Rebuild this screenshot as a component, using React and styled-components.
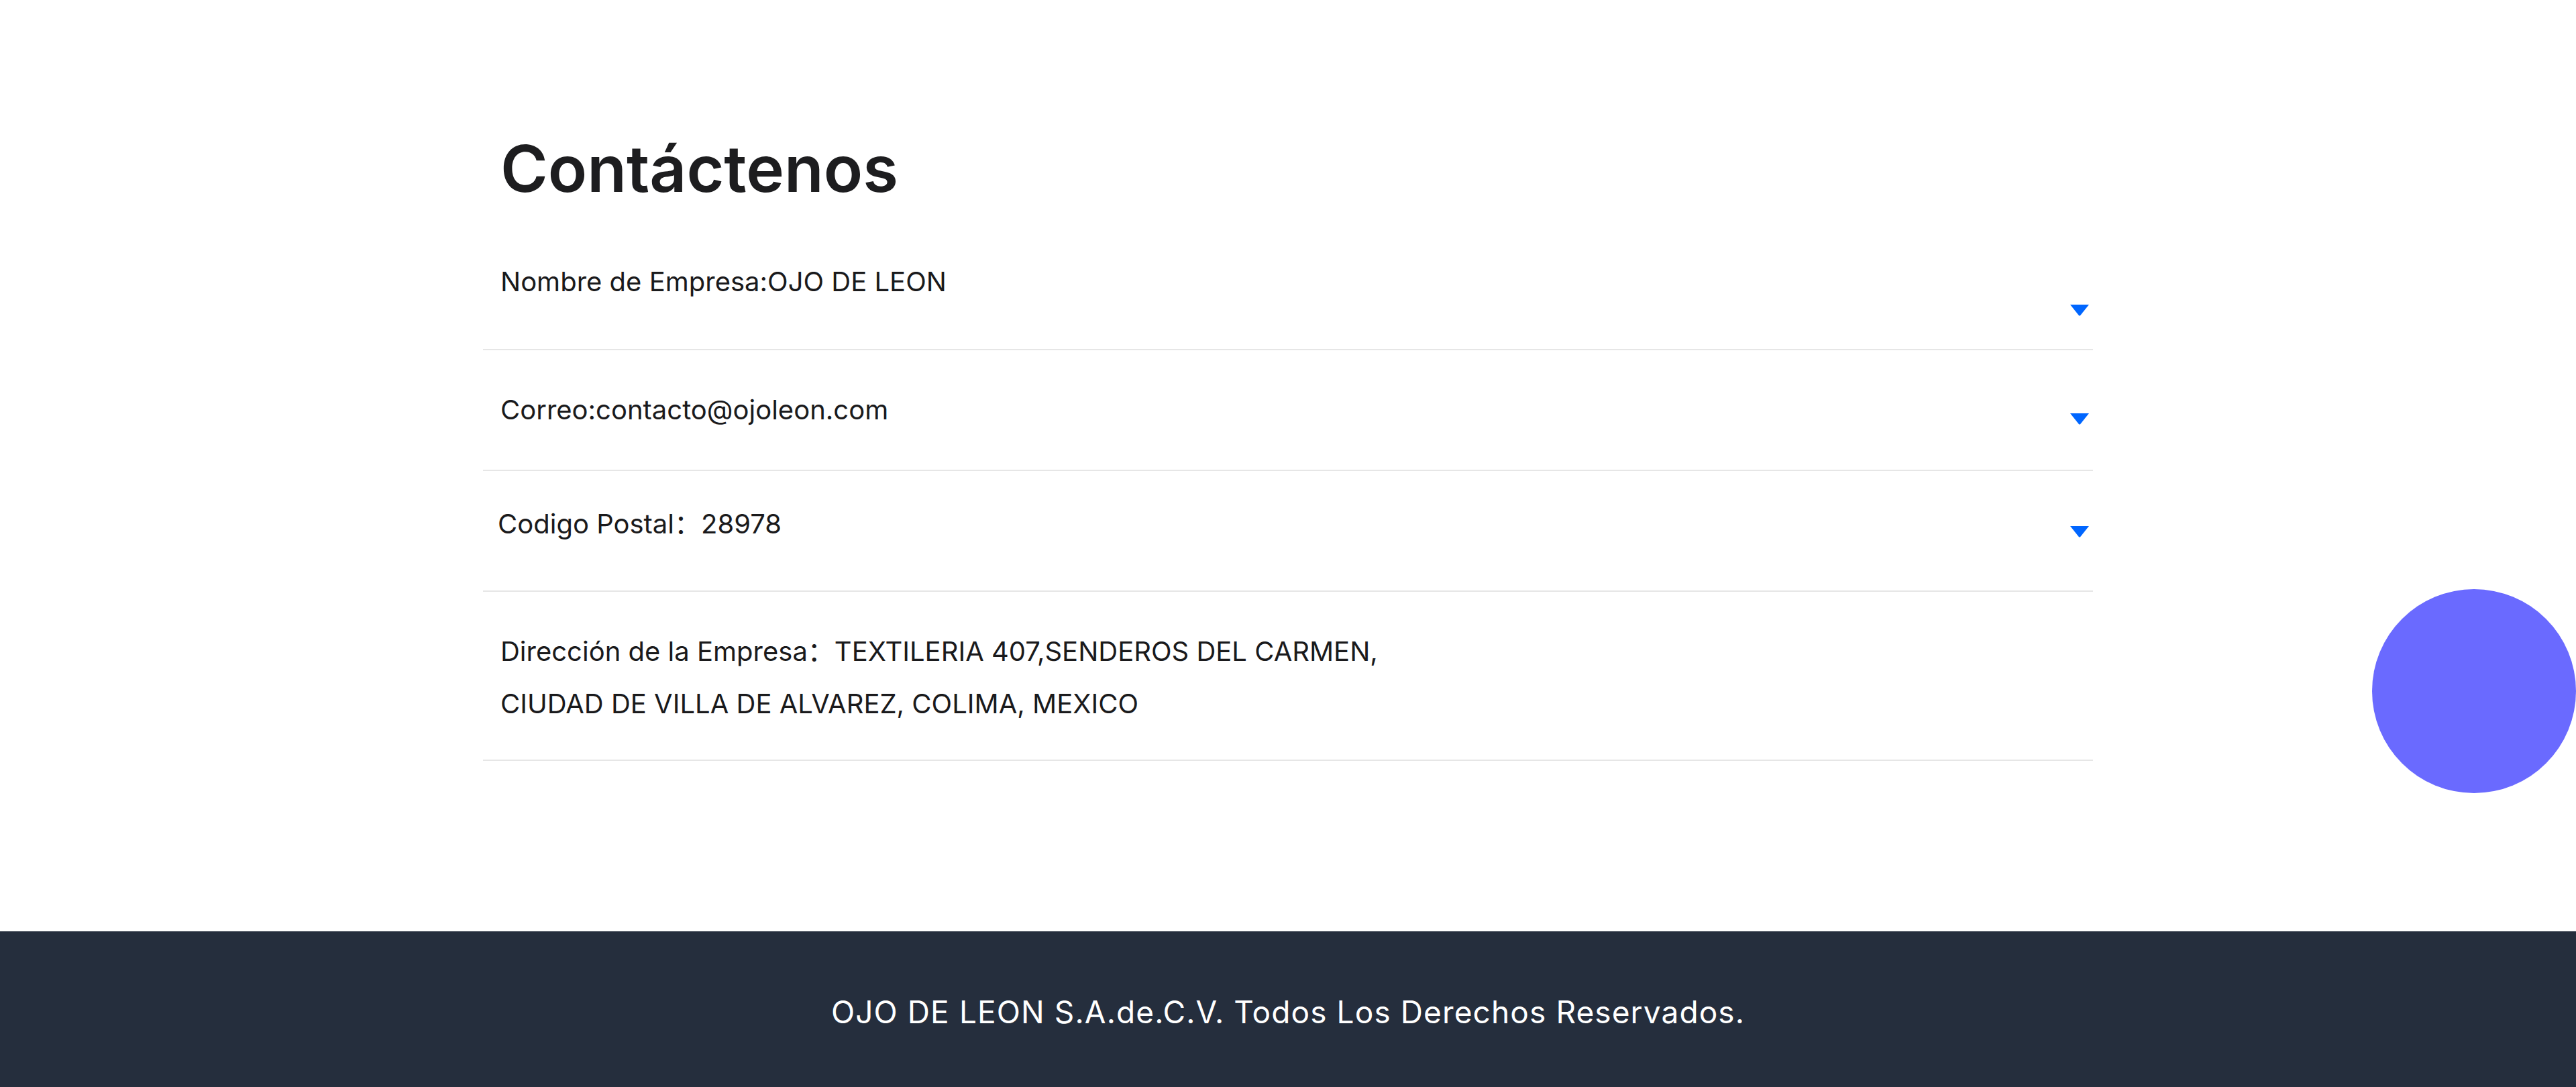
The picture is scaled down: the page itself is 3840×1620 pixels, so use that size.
import React from 'react';
import styled, { createGlobalStyle } from 'styled-components';

const GlobalStyle = createGlobalStyle`
  html, body {
    margin: 0;
    padding: 0;
    background: #ffffff;
    font-family: 'Inter', 'Noto Sans CJK SC', sans-serif;
    color: #1d1d1f;
  }
  * {
    box-sizing: border-box;
  }
`;

const Page = styled.div`
  display: flex;
  flex-direction: column;
  min-height: 100vh;
`;

const Container = styled.main`
  width: 100%;
  max-width: 2400px;
  margin: 0 auto;
  padding: 193px 0 254px;
`;

const Title = styled.h1`
  margin: 0;
  padding-left: 26px;
  font-size: 96px;
  line-height: 116px;
  font-weight: 600;
  color: #1d1d1f;
`;

const List = styled.div`
  display: flex;
  flex-direction: column;
`;

const Row = styled.div`
  display: flex;
  justify-content: space-between;
  align-items: flex-start;
  height: ${props => props.height}px;
  padding: ${props => props.top}px 6px 0 ${props => props.left || 26}px;
  border-bottom: 2px solid #e6e6e6;
`;

const Label = styled.div`
  font-size: 40px;
  line-height: ${props => props.lh || 46}px;
  font-weight: 400;
  color: #1a1a1c;
  white-space: nowrap;
`;

const Arrow = styled.svg`
  flex-shrink: 0;
  width: 28px;
  height: 17px;
  margin-top: ${props => props.offset}px;
  fill: #0066ff;
`;

const Caret = ({ offset }) => (
  <Arrow offset={offset} viewBox="0 0 28 17">
    <path d="M0 0 H28 L15 16.2 Q14 17 13 16.2 Z" />
  </Arrow>
);

const Footer = styled.footer`
  height: 232px;
  padding-top: 93px;
  background: #252e3d;
  color: #ffffff;
  text-align: center;
  font-size: 46px;
  line-height: 55px;
  letter-spacing: 1.1px;
  font-weight: 400;
`;

const FloatBubble = styled.div`
  position: fixed;
  top: 878px;
  right: 0;
  width: 304px;
  height: 304px;
  border-radius: 50%;
  background: #6a6aff;
`;

const rows = [
  { height: 213, top: 88, arrow: 57, text: 'Nombre de Empresa:OJO DE LEON' },
  { height: 180, top: 66, arrow: 28, text: 'Correo:contacto@ojoleon.com' },
  { height: 180, top: 56, arrow: 26, left: 22, text: 'Codigo Postal：28978' },
];

const App = () => {
  return (
    <Page>
      <GlobalStyle />
      <Container>
        <Title>Contáctenos</Title>
        <List>
          {rows.map(row => (
            <Row key={row.text} height={row.height} top={row.top} left={row.left}>
              <Label>{row.text}</Label>
              <Caret offset={row.arrow} />
            </Row>
          ))}
          <Row height={252} top={50}>
            <Label lh={78}>
              Dirección de la Empresa：TEXTILERIA 407,SENDEROS DEL CARMEN,
              <br />
              CIUDAD DE VILLA DE ALVAREZ, COLIMA, MEXICO
            </Label>
          </Row>
        </List>
      </Container>
      <Footer>OJO DE LEON S.A.de.C.V. Todos Los Derechos Reservados.</Footer>
      <FloatBubble />
    </Page>
  );
};

export default App;
